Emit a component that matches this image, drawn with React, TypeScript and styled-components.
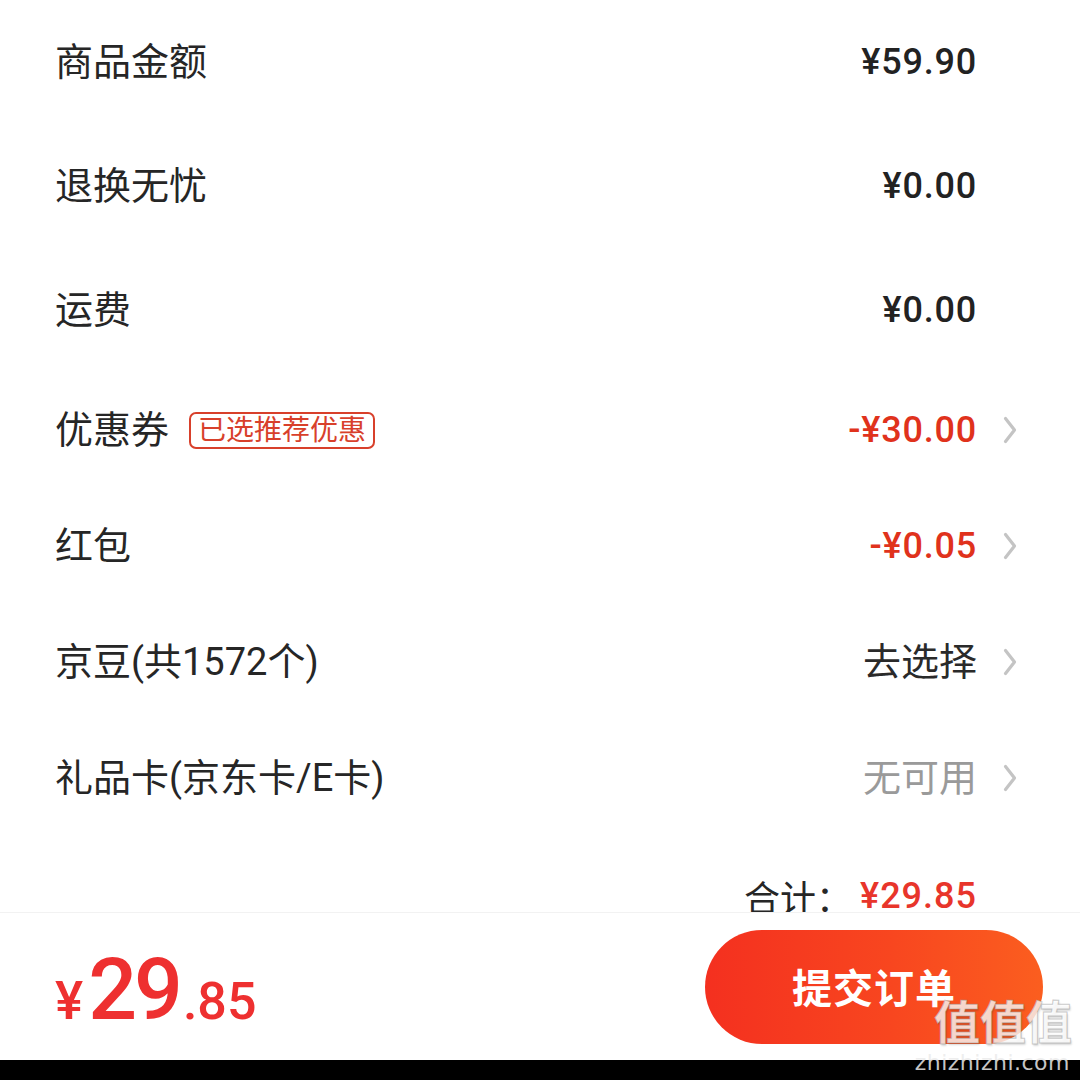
import styled, { createGlobalStyle } from "styled-components";

const GlobalStyle = createGlobalStyle`
  html, body {
    margin: 0;
    padding: 0;
    background: #ffffff;
  }
  body {
    font-family: Roboto, "Noto Sans CJK SC", "Noto Sans", sans-serif;
    color: #262626;
  }
`;

type Tone = "normal" | "red" | "muted" | "plain";

interface FeeRow {
  label: string;
  tag?: string;
  value: string;
  tone: Tone;
  arrow: boolean;
  tall: boolean;
}

const rows: FeeRow[] = [
  { label: "商品金额", value: "¥59.90", tone: "normal", arrow: false, tall: true },
  { label: "退换无忧", value: "¥0.00", tone: "normal", arrow: false, tall: true },
  { label: "运费", value: "¥0.00", tone: "normal", arrow: false, tall: true },
  { label: "优惠券", tag: "已选推荐优惠", value: "-¥30.00", tone: "red", arrow: true, tall: false },
  { label: "红包", value: "-¥0.05", tone: "red", arrow: true, tall: false },
  { label: "京豆(共1572个)", value: "去选择", tone: "plain", arrow: true, tall: false },
  { label: "礼品卡(京东卡/E卡)", value: "无可用", tone: "muted", arrow: true, tall: false },
];

function Chevron() {
  return (
    <svg width="16" height="30" viewBox="0 0 16 30">
      <path
        d="M3.5 3.5 L12.5 15 L3.5 26.5"
        fill="none"
        stroke="#c4c4c4"
        strokeWidth="3.2"
        strokeLinecap="round"
        strokeLinejoin="round"
      />
    </svg>
  );
}

export default function App() {
  return (
    <S.Page>
      <GlobalStyle />
      <S.Content>
        <S.List>
          {rows.map((row) => (
            <S.Row key={row.label} $tall={row.tall}>
              <S.LabelBox>
                <S.Label>{row.label}</S.Label>
                {row.tag && <S.Tag>{row.tag}</S.Tag>}
              </S.LabelBox>
              <S.Value $tone={row.tone}>{row.value}</S.Value>
              <S.ArrowSlot>{row.arrow && <Chevron />}</S.ArrowSlot>
            </S.Row>
          ))}
        </S.List>
        <S.Divider />
        <S.TotalRow>
          <S.TotalLabel>合计：</S.TotalLabel>
          <S.TotalValue>¥29.85</S.TotalValue>
        </S.TotalRow>
      </S.Content>

      <S.BottomBar>
        <S.Price>
          <S.Yen>¥</S.Yen>
          <S.Int>29</S.Int>
          <S.Dec>.85</S.Dec>
        </S.Price>
        <S.Submit>提交订单</S.Submit>
        <S.Watermark>
          <S.MarkBig>值值值</S.MarkBig>
        </S.Watermark>
      </S.BottomBar>
      <S.NavStrip>
        <S.MarkSmall>zhizhizhi.com</S.MarkSmall>
      </S.NavStrip>
    </S.Page>
  );
}

const toneColor: Record<Tone, string> = {
  normal: "#222222",
  red: "#e0321c",
  muted: "#9a9a9a",
  plain: "#2a2a2a",
};

const isText = (t: Tone) => t === "plain" || t === "muted";

const S = {
  Page: styled.div`
    width: 1080px;
    height: 1080px;
    display: flex;
    flex-direction: column;
    overflow: hidden;
    position: relative;
  `,

  Content: styled.div`
    flex: 1;
    overflow: hidden;
    display: flex;
    flex-direction: column;
  `,

  List: styled.div`
    display: flex;
    flex-direction: column;
  `,

  Row: styled.div<{ $tall: boolean }>`
    height: ${(p) => (p.$tall ? "124px" : "116px")};
    display: grid;
    grid-template-columns: 1fr auto 103px;
    align-items: center;
    padding-left: 55px;
  `,

  LabelBox: styled.div`
    display: flex;
    align-items: center;
    gap: 20px;
  `,

  Label: styled.span`
    font-size: 38px;
    color: #262626;
    line-height: 1;
  `,

  Tag: styled.span`
    font-size: 28px;
    line-height: 33px;
    color: #d8402b;
    border: 2px solid #d8402b;
    border-radius: 7px;
    padding: 0 7px;
  `,

  Value: styled.span<{ $tone: Tone }>`
    font-size: ${(p) => (isText(p.$tone) ? "38px" : "36px")};
    font-weight: ${(p) => (isText(p.$tone) ? 400 : 500)};
    letter-spacing: ${(p) => (isText(p.$tone) ? "0" : "0.8px")};
    color: ${(p) => toneColor[p.$tone]};
    line-height: 1;
  `,

  ArrowSlot: styled.div`
    display: flex;
    align-items: center;
    padding-left: 25px;
  `,

  Divider: styled.div`
    height: 2px;
    margin-left: 55px;
    background: #f0f0f0;
  `,

  TotalRow: styled.div`
    height: 120px;
    flex-shrink: 0;
    display: flex;
    align-items: center;
    justify-content: flex-end;
    padding-right: 103px;
  `,

  TotalLabel: styled.span`
    font-size: 36px;
    color: #262626;
    margin-right: 8px;
  `,

  TotalValue: styled.span`
    font-size: 36px;
    font-weight: 500;
    letter-spacing: 1px;
    color: #e8352b;
  `,

  BottomBar: styled.div`
    height: 147px;
    flex-shrink: 0;
    border-top: 1px solid #f2f2f2;
    background: #ffffff;
    display: flex;
    align-items: center;
    justify-content: space-between;
    padding: 0 37px 0 55px;
    position: relative;
  `,

  Price: styled.div`
    display: flex;
    align-items: baseline;
    color: #ee3030;
    font-weight: 500;
    line-height: 1;
    padding-top: 6px;
  `,

  Yen: styled.span`
    font-size: 53px;
    margin-right: 5px;
  `,

  Int: styled.span`
    font-size: 86px;
    letter-spacing: -3px;
  `,

  Dec: styled.span`
    font-size: 52px;
    margin-left: 3px;
  `,

  Submit: styled.button`
    width: 338px;
    height: 114px;
    border: none;
    border-radius: 57px;
    background: linear-gradient(90deg, #f4301f 0%, #f8461f 55%, #fb5e1f 100%);
    color: #ffffff;
    font-family: "Noto Sans CJK SC", sans-serif;
    font-size: 40px;
    font-weight: 700;
    letter-spacing: 1px;
    padding: 0;
    padding-bottom: 2px;
  `,

  Watermark: styled.div`
    position: absolute;
    right: 8px;
    bottom: 8px;
    pointer-events: none;
  `,

  MarkBig: styled.span`
    font-family: "Noto Sans CJK SC", sans-serif;
    font-size: 46px;
    font-weight: 700;
    color: rgba(255, 255, 255, 0.8);
    -webkit-text-stroke: 1px rgba(150, 150, 150, 0.5);
    text-shadow: 1px 2px 2px rgba(0, 0, 0, 0.15);
  `,

  NavStrip: styled.div`
    height: 20px;
    flex-shrink: 0;
    background: #000000;
    position: relative;
  `,

  MarkSmall: styled.span`
    position: absolute;
    right: 10px;
    top: -10px;
    font-family: "DejaVu Sans", sans-serif;
    font-size: 22px;
    color: rgba(235, 235, 235, 0.85);
    letter-spacing: 0.5px;
  `,
};
